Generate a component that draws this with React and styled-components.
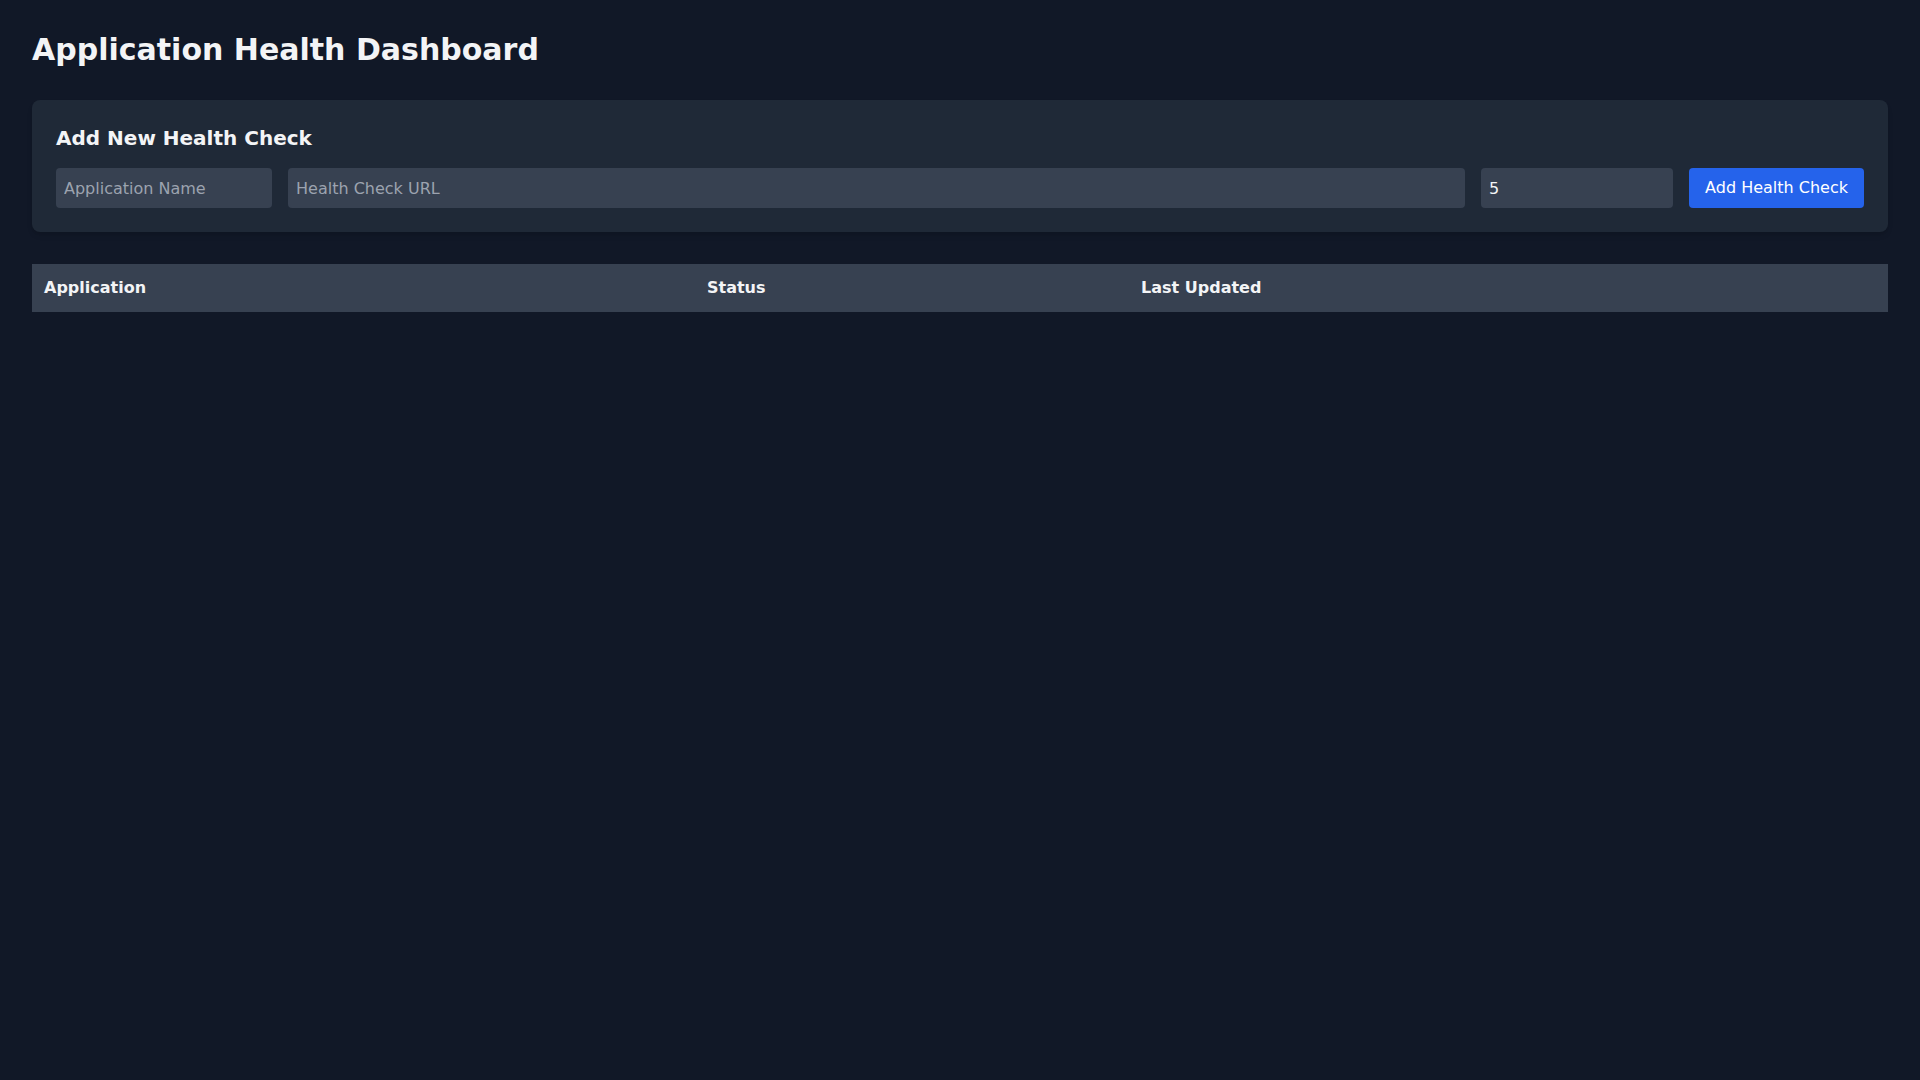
import React from "react";
import styled, { createGlobalStyle } from "styled-components";

const Global = createGlobalStyle`
  * { box-sizing: border-box; }
  html, body { margin: 0; padding: 0; background: #111827; }
  body { font-family: "DejaVu Sans", sans-serif; color: #f3f4f6; }
`;

const Page = styled.div`
  min-height: 100vh;
  padding: 32px;
  background: #111827;
`;

const Title = styled.h1`
  margin: 0 0 32px;
  font-size: 30px;
  line-height: 36px;
  font-weight: 700;
  color: #f3f4f6;
`;

const Card = styled.section`
  background: #1f2937;
  border-radius: 8px;
  padding: 24px;
  margin-bottom: 32px;
  box-shadow: 0 4px 6px -1px rgba(0, 0, 0, 0.1), 0 2px 4px -2px rgba(0, 0, 0, 0.1);
`;

const CardTitle = styled.h2`
  margin: 0 0 16px;
  font-size: 20px;
  line-height: 28px;
  font-weight: 700;
  color: #f3f4f6;
`;

const FormRow = styled.div`
  display: flex;
  gap: 16px;
  align-items: stretch;
`;

const Input = styled.input`
  width: ${(p) => p.$width || "auto"};
  min-width: 0;
  flex: ${(p) => (p.$grow ? "1 1 auto" : "0 0 auto")};
  height: 40px;
  padding: 8px;
  border: none;
  border-radius: 4px;
  background: #374151;
  color: #f3f4f6;
  font-family: "DejaVu Sans", sans-serif;
  font-size: 16px;
  line-height: 24px;
  outline: none;
  &::placeholder { color: #9ca3af; }
`;

const Button = styled.button`
  flex: 0 0 auto;
  height: 40px;
  padding: 8px 16px;
  border: none;
  border-radius: 4px;
  background: #2563eb;
  color: #ffffff;
  font-family: "DejaVu Sans", sans-serif;
  font-size: 16px;
  line-height: 24px;
  cursor: pointer;
`;

const Table = styled.table`
  width: 100%;
  border-collapse: collapse;
  table-layout: fixed;
`;

const HeadRow = styled.tr`
  background: #374151;
`;

const Th = styled.th`
  width: ${(p) => p.$width};
  padding: 12px;
  text-align: left;
  font-size: 16px;
  line-height: 24px;
  font-weight: 700;
  color: #f3f4f6;
`;

export default function App() {
  return (
    <>
      <Global />
      <Page>
        <Title>Application Health Dashboard</Title>
        <Card>
          <CardTitle>Add New Health Check</CardTitle>
          <FormRow>
            <Input $width="216px" placeholder="Application Name" />
            <Input $grow placeholder="Health Check URL" />
            <Input $width="192px" type="number" defaultValue="5" />
            <Button>Add Health Check</Button>
          </FormRow>
        </Card>
        <Table>
          <thead>
            <HeadRow>
              <Th $width="663px">Application</Th>
              <Th $width="434px">Status</Th>
              <Th>Last Updated</Th>
            </HeadRow>
          </thead>
          <tbody></tbody>
        </Table>
      </Page>
    </>
  );
}
